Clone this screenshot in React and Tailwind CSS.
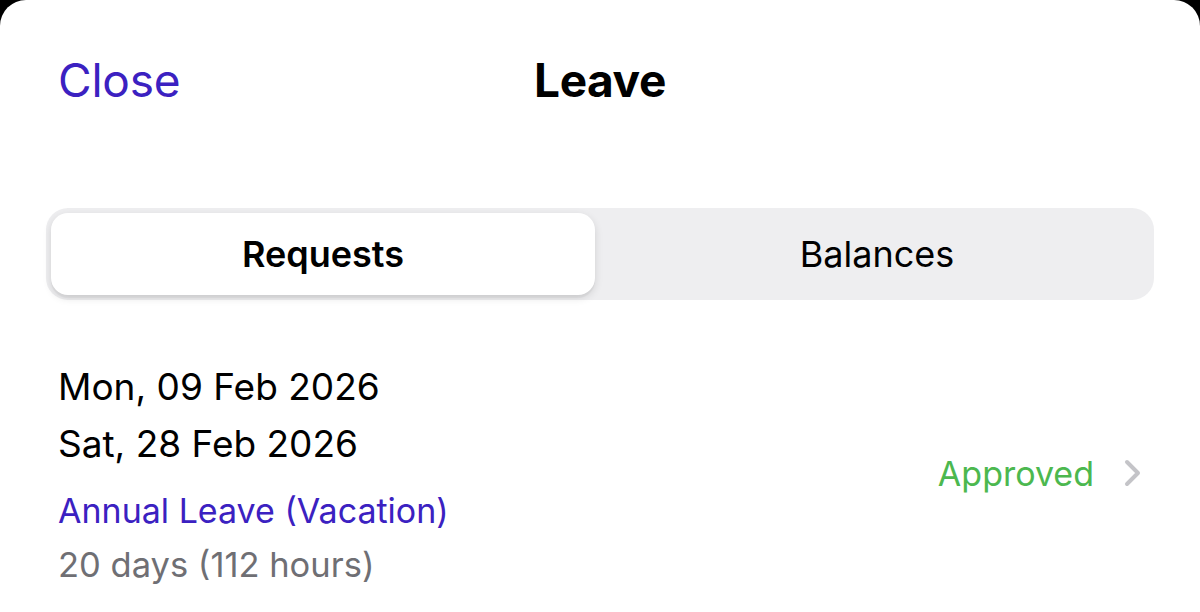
import React, { useState } from 'react';

const tabs = ['Requests', 'Balances'];

const App = () => {
  const [active, setActive] = useState('Requests');

  return (
    <div className="w-[1200px] h-[612px] bg-black overflow-hidden" style={{ fontFamily: 'Inter, "Noto Sans", sans-serif' }}>
      <div className="h-full bg-white rounded-t-[26px]">
        {/* barra superior */}
        <div className="grid grid-cols-3 items-center h-[160px] px-[58px]">
          <button className="justify-self-start text-[46px] leading-none text-[#3b21c1] tracking-[-0.2px]">Close</button>
          <h1 className="justify-self-center text-[46px] leading-none font-bold text-black tracking-[-0.4px]">Leave</h1>
          <div />
        </div>

        {/* control segmentado */}
        <div className="mt-[48px] mx-[46px] h-[92px] bg-[#eeeef0] rounded-[22px] p-[5px] flex gap-[10px]">
          {tabs.map(tab => (
            <button
              key={tab}
              onClick={() => setActive(tab)}
              className={`flex-1 flex items-center justify-center rounded-[17px] text-[36px] text-black ${
                active === tab ? 'bg-white font-semibold shadow-[0_3px_8px_rgba(0,0,0,0.12),0_3px_1px_rgba(0,0,0,0.04)]' : 'font-normal'
              }`}
            >
              {tab}
            </button>
          ))}
        </div>

        {/* solicitud */}
        <div className="mt-[58px] pl-[58px] pr-[58px] flex items-center">
          <div className="flex-1">
            <p className="text-[37px] leading-[57px] text-black">Mon, 09 Feb 2026</p>
            <p className="text-[37px] leading-[57px] text-black">Sat, 28 Feb 2026</p>
            <p className="mt-[12px] text-[34px] leading-[54px] text-[#3b21c1]">Annual Leave (Vacation)</p>
            <p className="text-[34.5px] leading-[54px] text-[#6f6f74]">20 days (112 hours)</p>
          </div>
          <div className="flex items-center gap-[30px] -mt-[4px]">
            <span className="text-[34px] text-[#4cb84f]">Approved</span>
            <svg width="18" height="28" viewBox="0 0 18 28" fill="none">
              <path d="M3 3l11 11-11 11" stroke="#c4c4c8" strokeWidth="4" strokeLinecap="round" strokeLinejoin="round" />
            </svg>
          </div>
        </div>
      </div>
    </div>
  );
};

export default App;
